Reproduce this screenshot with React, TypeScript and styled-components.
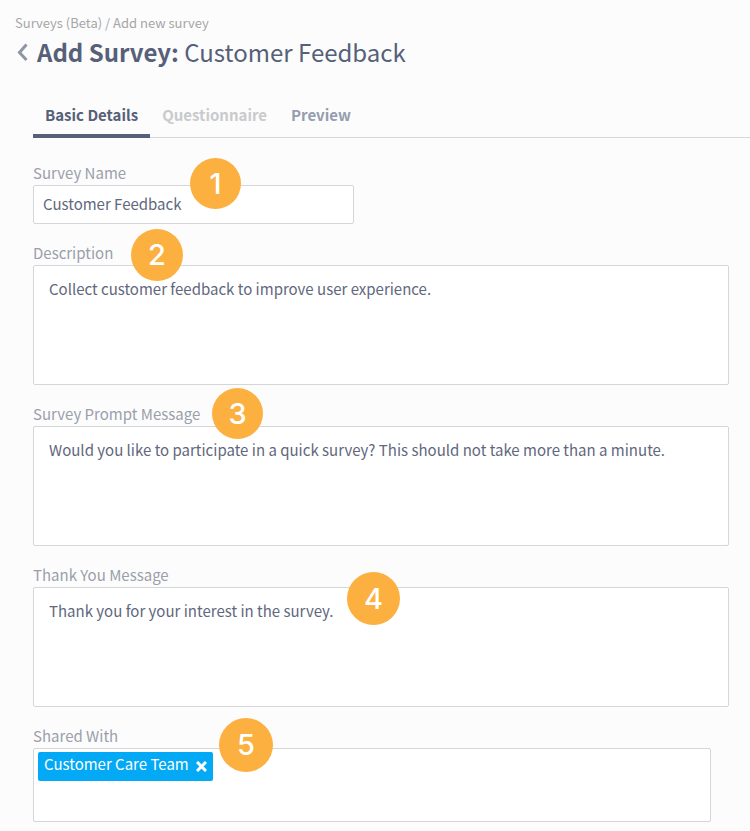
import React, { useState } from "react";
import styled, { createGlobalStyle } from "styled-components";

const GlobalStyle = createGlobalStyle`
  *, *::before, *::after { box-sizing: border-box; }
  body {
    margin: 0;
    background: #fcfcfc;
    color: #566078;
    font-family: "Noto Sans CJK SC", "Noto Sans", sans-serif;
    font-size: 15px;
    line-height: 24px;
  }
  button, input, textarea { font: inherit; color: inherit; }
`;

const Header = styled.header`
  padding: 12px 15px 0;
`;

const Breadcrumbs = styled.nav`
  font-size: 13px;
  line-height: 22px;
  color: #a6a6a6;
`;

const Crumb = styled.a`
  color: inherit;
  text-decoration: none;
`;

const TitleRow = styled.div`
  display: flex;
  align-items: center;
  gap: 8px;
`;

const BackButton = styled.button`
  display: flex;
  padding: 0;
  border: 0;
  background: none;
  color: #8e96a6;
  cursor: pointer;
`;

const Title = styled.h1`
  margin: 0;
  font-size: 24px;
  line-height: 36px;
  font-weight: 400;
`;

const TitleLabel = styled.strong`
  font-weight: 700;
`;

const Tabs = styled.div`
  display: flex;
  margin: 28px 0 0 33px;
  box-shadow: inset 0 -1px #d5d8dc;
`;

const Tab = styled.button<{ $active: boolean }>`
  padding: 4px 12px 6px;
  border: 0;
  border-bottom: 4px solid ${(p) => (p.$active ? "#566078" : "transparent")};
  background: none;
  font-weight: 700;
  line-height: 26px;
  color: ${(p) => (p.$active ? "#566078" : "#959dae")};
  cursor: pointer;

  &:disabled {
    color: #c9cacc;
    cursor: default;
  }
`;

const Form = styled.form`
  display: flex;
  flex-direction: column;
  gap: 17px;
  padding: 23px 21px 9px 33px;
`;

const Field = styled.div`
  position: relative;
  display: flex;
  flex-direction: column;
`;

const Label = styled.label`
  align-self: flex-start;
  color: #9a9fab;
`;

const TextInput = styled.input`
  width: 100%;
  max-width: 321px;
  height: 39px;
  padding: 0 9px 2px;
  border: 1px solid #d5d6d8;
  border-radius: 2px;
  background: #fff;
  color: #5f687d;
`;

const TextArea = styled.textarea`
  display: block;
  width: 100%;
  height: 120px;
  padding: 11px 15px;
  border: 1px solid #d5d6d8;
  border-radius: 2px;
  background: #fff;
  color: #5f687d;
  resize: none;
`;

const TagBox = styled.div`
  display: flex;
  align-items: flex-start;
  min-height: 74px;
  margin-right: 18px;
  padding: 3px 4px;
  border: 1px solid #d5d6d8;
  border-radius: 2px;
  background: #fff;
`;

const Tag = styled.span`
  display: flex;
  align-items: center;
  gap: 7px;
  padding: 0 6px 5px;
  border-radius: 2px;
  background: #03a9f4;
  color: #fff;
`;

const RemoveButton = styled.button`
  display: flex;
  padding: 4px 0 0;
  border: 0;
  background: none;
  cursor: pointer;
`;

const TagInput = styled.input`
  flex: 1;
  min-width: 0;
  border: 0;
  outline: 0;
  background: none;
`;

const StepBadge = styled.span<{ $size: number; $left: number; $top: number }>`
  position: absolute;
  left: ${(p) => p.$left}px;
  top: ${(p) => p.$top}px;
  display: flex;
  align-items: center;
  justify-content: center;
  width: ${(p) => p.$size}px;
  height: ${(p) => p.$size}px;
  border-radius: 50%;
  background: #fcb040;
  color: #fff;
  font-family: Inter, sans-serif;
  font-size: 29px;
  font-weight: 500;
  pointer-events: none;
`;

const tabs = [
  { name: "Basic Details", disabled: false },
  { name: "Questionnaire", disabled: true },
  { name: "Preview", disabled: false },
];

const messages = [
  {
    id: "description",
    label: "Description",
    text: "Collect customer feedback to improve user experience.",
    badge: { step: 2, size: 52, left: 98, top: -12 },
  },
  {
    id: "prompt",
    label: "Survey Prompt Message",
    text: "Would you like to participate in a quick survey? This should not take more than a minute.",
    badge: { step: 3, size: 51, left: 179, top: -14 },
  },
  {
    id: "thanks",
    label: "Thank You Message",
    text: "Thank you for your interest in the survey.",
    badge: { step: 4, size: 53, left: 314, top: 9 },
  },
];

export default function App() {
  const [active, setActive] = useState("Basic Details");
  const [teams, setTeams] = useState(["Customer Care Team"]);

  return (
    <>
      <GlobalStyle />
      <Header>
        <Breadcrumbs aria-label="Breadcrumb">
          <Crumb href="#surveys">Surveys (Beta)</Crumb> / Add new survey
        </Breadcrumbs>
        <TitleRow>
          <BackButton type="button" aria-label="Back">
            <svg width="14" height="20" viewBox="0 0 14 20" fill="none" stroke="currentColor" strokeWidth="3">
              <path d="M11.5 2.5 4.5 10.5l7 7.5" />
            </svg>
          </BackButton>
          <Title>
            <TitleLabel>Add Survey:</TitleLabel> Customer Feedback
          </Title>
        </TitleRow>
      </Header>

      <Tabs role="tablist">
        {tabs.map((tab) => (
          <Tab
            key={tab.name}
            type="button"
            role="tab"
            aria-selected={active === tab.name}
            disabled={tab.disabled}
            $active={active === tab.name}
            onClick={() => setActive(tab.name)}
          >
            {tab.name}
          </Tab>
        ))}
      </Tabs>

      <Form>
        <Field>
          <Label htmlFor="name">Survey Name</Label>
          <TextInput id="name" type="text" defaultValue="Customer Feedback" />
          <StepBadge $size={51} $left={157} $top={-3}>1</StepBadge>
        </Field>

        {messages.map(({ id, label, text, badge }) => (
          <Field key={id}>
            <Label htmlFor={id}>{label}</Label>
            <TextArea id={id} defaultValue={text} />
            <StepBadge $size={badge.size} $left={badge.left} $top={badge.top}>
              {badge.step}
            </StepBadge>
          </Field>
        ))}

        <Field>
          <Label htmlFor="shared">Shared With</Label>
          <TagBox>
            {teams.map((team) => (
              <Tag key={team}>
                {team}
                <RemoveButton
                  type="button"
                  aria-label={`Remove ${team}`}
                  onClick={() => setTeams(teams.filter((t) => t !== team))}
                >
                  <svg width="11" height="11" viewBox="0 0 11 11" stroke="currentColor" strokeWidth="3">
                    <path d="M1 1l9 9M10 1l-9 9" />
                  </svg>
                </RemoveButton>
              </Tag>
            ))}
            <TagInput id="shared" type="text" />
          </TagBox>
          <StepBadge $size={54} $left={186} $top={-6}>5</StepBadge>
        </Field>
      </Form>
    </>
  );
}
